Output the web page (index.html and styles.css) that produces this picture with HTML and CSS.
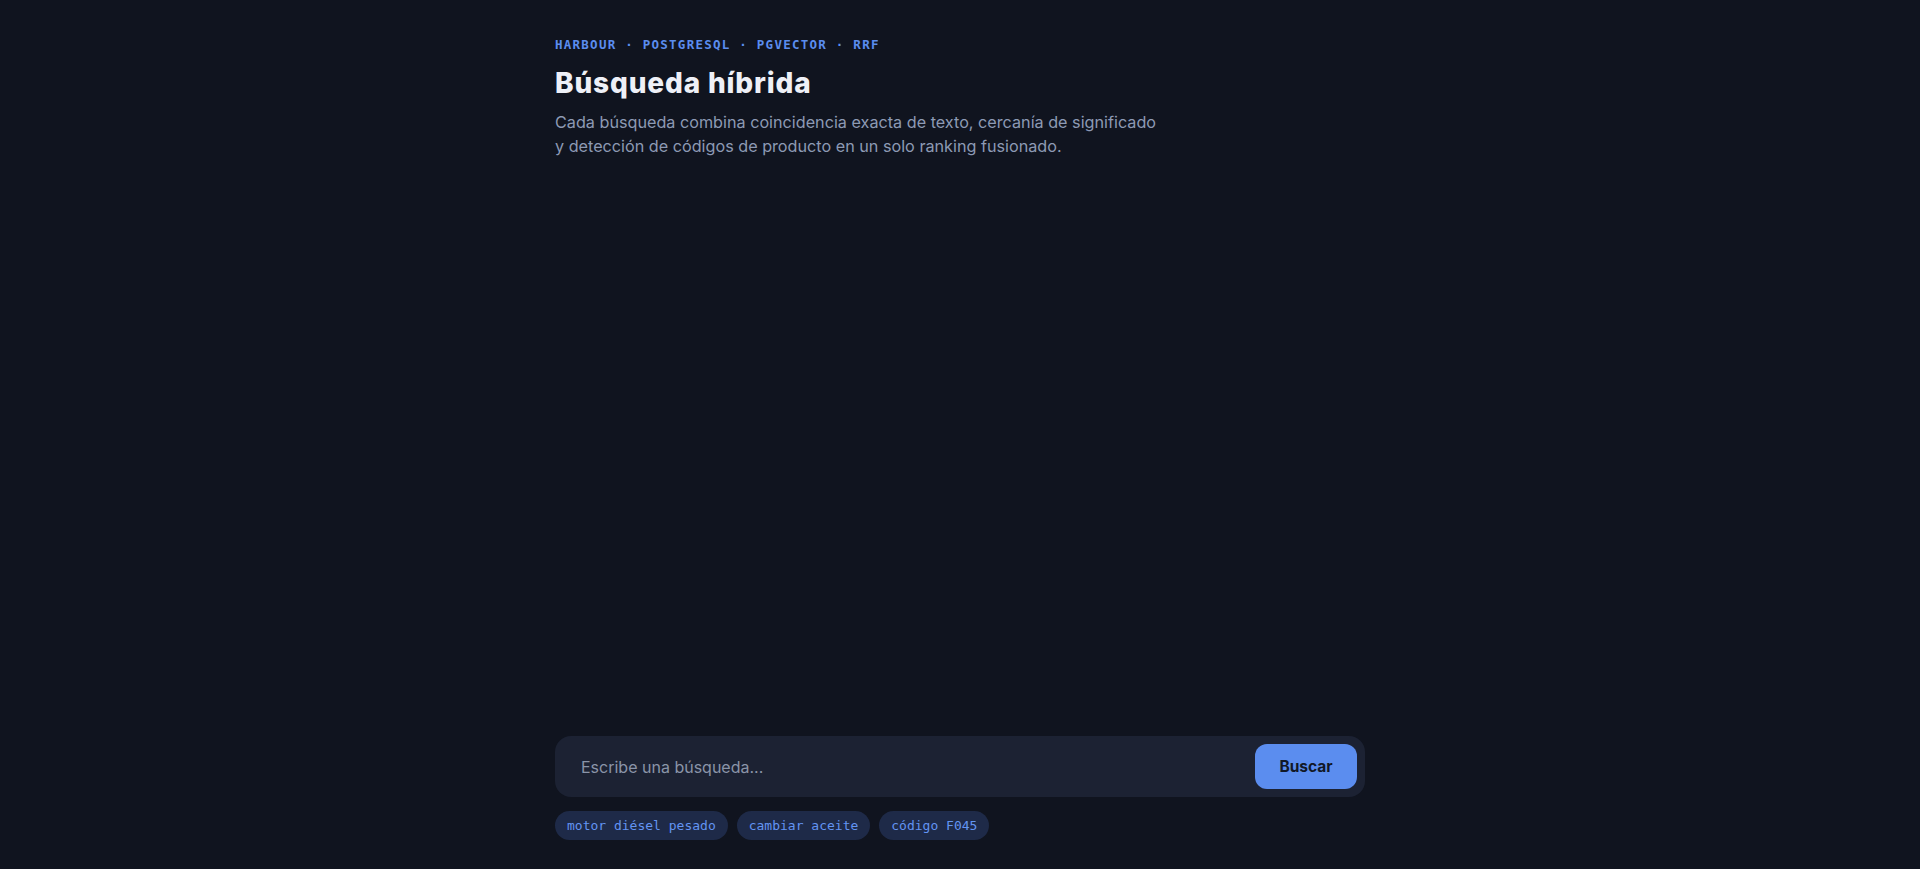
FILE: index.html
```html
<!DOCTYPE html>
<html lang="es">
<head>
<meta charset="utf-8">
<title>Búsqueda híbrida</title>
<link rel="stylesheet" href="styles.css">
</head>
<body>
  <main class="page">
    <header class="intro">
      <p class="eyebrow">HARBOUR · POSTGRESQL · PGVECTOR · RRF</p>
      <h1 class="title">Búsqueda híbrida</h1>
      <p class="lede">Cada búsqueda combina coincidencia exacta de texto, cercanía de significado<br>y detección de códigos de producto en un solo ranking fusionado.</p>
    </header>

    <section class="results"></section>

    <footer class="composer">
      <form class="search" onsubmit="return false">
        <input class="search-input" type="text" placeholder="Escribe una búsqueda...">
        <button class="search-btn" type="submit">Buscar</button>
      </form>
      <div class="chips">
        <button class="chip" type="button">motor diésel pesado</button>
        <button class="chip" type="button">cambiar aceite</button>
        <button class="chip" type="button">código F045</button>
      </div>
    </footer>
  </main>
</body>
</html>
```

FILE: styles.css
```css
* { box-sizing: border-box; }

html, body {
  margin: 0;
  height: 100%;
  background: #10141f;
  color: #e8ebf3;
  font-family: Inter, "Noto Sans", sans-serif;
}

.page {
  width: 810px;
  margin: 0 auto;
  height: 100vh;
  display: flex;
  flex-direction: column;
  padding: 38px 0 29px;
}

.eyebrow {
  margin: 0;
  font-family: "DejaVu Sans Mono", monospace;
  font-size: 12.5px;
  font-weight: 700;
  letter-spacing: 0.1em;
  line-height: 14px;
  color: #5b8def;
}

.title {
  margin: 14px 0 0;
  font-family: Inter, sans-serif;
  font-size: 28px;
  font-weight: 800;
  letter-spacing: 0.03em;
  line-height: 34px;
  color: #eef0f7;
}

.lede {
  margin: 10px 0 0;
  font-size: 16.2px;
  line-height: 24px;
  color: #8d9ab4;
}

.results { flex: 1; }

.search {
  display: flex;
  align-items: center;
  height: 61px;
  padding: 0 8px 0 24px;
  background: #1c2233;
  border-radius: 16px;
}

.search-input {
  flex: 1;
  background: transparent;
  border: 0;
  outline: none;
  font-family: Inter, sans-serif;
  font-size: 16px;
  color: #e8ebf3;
}

.search-input::placeholder { color: #8a94a8; }

.search-btn {
  width: 102px;
  height: 45px;
  border: 0;
  border-radius: 12px;
  background: #5b8def;
  color: #111827;
  font-family: Inter, sans-serif;
  font-size: 15.5px;
  font-weight: 700;
}

.chips {
  display: flex;
  gap: 9px;
  margin-top: 14px;
}

.chip {
  height: 29px;
  padding: 0 12px;
  border: 0;
  border-radius: 15px;
  background: #1e2a48;
  color: #6394f2;
  font-family: "DejaVu Sans Mono", monospace;
  font-size: 13px;
}
```
